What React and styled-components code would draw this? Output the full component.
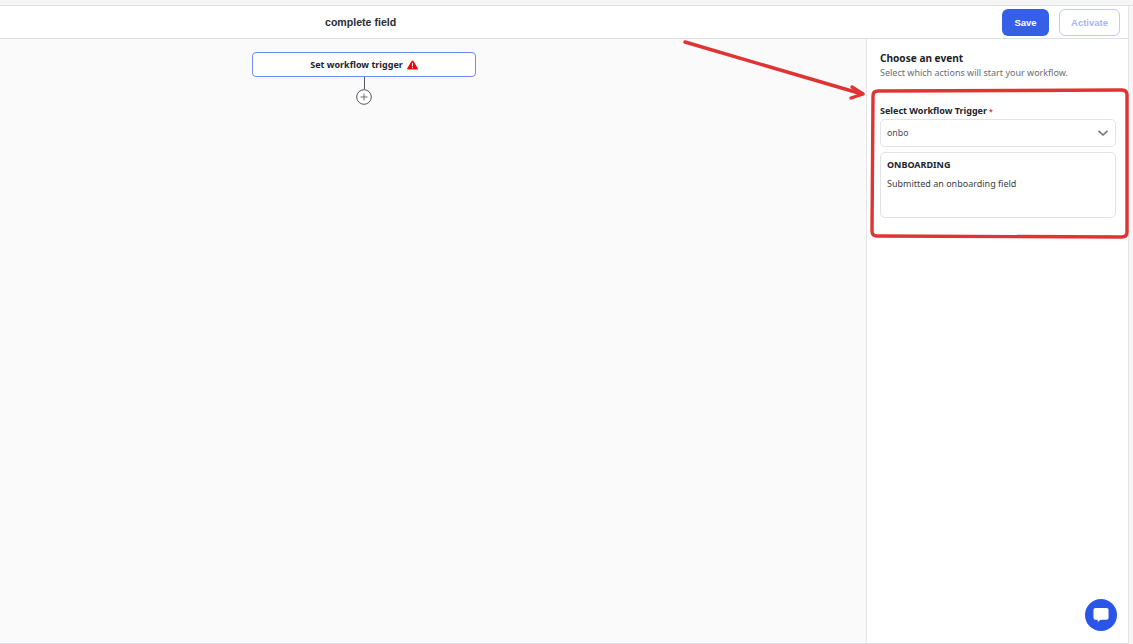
import React from "react";
import styled, { createGlobalStyle } from "styled-components";

const GlobalStyle = createGlobalStyle`
  html, body {
    margin: 0;
    padding: 0;
    background: #f7f7f8;
    font-family: "Noto Sans", "Open Sans", sans-serif;
    overflow: hidden;
  }
`;

const Page = styled.div`
  position: relative;
  width: 1133px;
  height: 644px;
  display: flex;
  flex-direction: column;
  overflow: hidden;
`;

const TopStrip = styled.div`
  height: 5px;
  background: #f5f5f6;
  border-bottom: 1px solid #dfe0e6;
`;

const Window = styled.div`
  width: 1128px;
  height: 637px;
  display: flex;
  flex-direction: column;
  background: #ffffff;
  border-right: 1px solid #e4e5ea;
  border-bottom: 1px solid #dfe0e6;
`;

const Header = styled.header`
  height: 32px;
  flex-shrink: 0;
  display: flex;
  align-items: center;
  justify-content: flex-end;
  gap: 10px;
  padding-right: 8px;
  border-bottom: 1px solid #dfe0e6;
  position: relative;
`;

const Title = styled.h1`
  position: absolute;
  left: 325px;
  top: 9px;
  margin: 0;
  font-family: "Liberation Sans", sans-serif;
  font-size: 10.6px;
  line-height: 14px;
  font-weight: 700;
  color: #2b2d38;
`;

const Button = styled.button`
  height: 27px;
  border-radius: 6px;
  font-family: "Liberation Sans", sans-serif;
  font-size: 9.5px;
  font-weight: 700;
  padding: 0;
  width: ${(p) => (p.$primary ? "47px" : "61px")};
  color: ${(p) => (p.$primary ? "#ffffff" : "#a6b6f4")};
  background: ${(p) => (p.$primary ? "#3560e6" : "#ffffff")};
  border: ${(p) => (p.$primary ? "none" : "1px solid #bfcbf6")};
`;

const Body = styled.div`
  flex: 1;
  display: flex;
  min-height: 0;
`;

const Canvas = styled.main`
  width: 866px;
  background: #fafafa;
  display: flex;
  flex-direction: column;
  align-items: center;
  padding-top: 13px;
  padding-right: 138px;
  box-sizing: border-box;
`;

const TriggerNode = styled.div`
  width: 224px;
  height: 25px;
  box-sizing: border-box;
  background: #ffffff;
  border: 1px solid #6f8dee;
  border-radius: 4px;
  display: flex;
  align-items: center;
  justify-content: center;
  gap: 4px;
  font-size: 9px;
  font-weight: 700;
  color: #22242e;
`;

const Connector = styled.div`
  width: 1px;
  height: 12px;
  background: #55575f;
`;

const Side = styled.aside`
  flex: 1;
  border-left: 1px solid #e4e5ea;
  padding: 12px 12px 0 13px;
  background: #ffffff;
`;

const SideTitle = styled.h2`
  margin: 0;
  font-size: 10.1px;
  line-height: 14px;
  font-weight: 700;
  color: #1d1f28;
`;

const SideHint = styled.p`
  margin: 1px 0 0;
  font-size: 9px;
  line-height: 13px;
  color: #6a6d78;
`;

const FieldLabel = styled.label`
  display: block;
  margin-top: 25px;
  font-size: 9px;
  line-height: 13px;
  font-weight: 700;
  color: #22242e;
`;

const Required = styled.span`
  color: #e5303a;
  margin-left: 2px;
  font-size: 7px;
`;

const SelectBox = styled.div`
  margin-top: 1px;
  height: 28px;
  box-sizing: border-box;
  border: 1px solid #e2e3ea;
  border-radius: 5px;
  display: flex;
  align-items: center;
  justify-content: space-between;
  padding: 0 6px 1px;
  font-size: 8.8px;
  color: #4a4c56;
`;

const OptionCard = styled.div`
  margin-top: 5px;
  height: 66px;
  box-sizing: border-box;
  border: 1px solid #e2e3ea;
  border-radius: 5px;
  padding: 5px 6px;
`;

const OptionName = styled.div`
  font-size: 9px;
  line-height: 14px;
  font-weight: 700;
  color: #22242e;
`;

const OptionText = styled.div`
  margin-top: 5px;
  font-size: 9px;
  line-height: 13px;
  color: #3c3e48;
`;

const Annotation = styled.svg`
  position: absolute;
  left: 0;
  top: 0;
  pointer-events: none;
`;

const ChatBubble = styled.button`
  position: absolute;
  left: 1085px;
  top: 599px;
  width: 32px;
  height: 32px;
  padding: 0;
  border: none;
  border-radius: 50%;
  background: #2b55e8;
  display: flex;
  align-items: center;
  justify-content: center;
`;

export default function App() {
  return (
    <Page>
      <GlobalStyle />
      <TopStrip />
      <Window>
        <Header>
          <Title>complete field</Title>
          <Button $primary>Save</Button>
          <Button>Activate</Button>
        </Header>
        <Body>
          <Canvas>
            <TriggerNode>
              Set workflow trigger
              <svg width="11" height="10" viewBox="0 0 11 10">
                <path d="M4.6 1.1 Q5.5 -0.1 6.4 1.1 L10.6 8 Q11.2 9.6 9.6 9.6 L1.4 9.6 Q-0.2 9.6 0.4 8 Z" fill="#f80000" />
                <rect x="5" y="2.8" width="1" height="3.6" fill="#ffffff" />
                <rect x="5" y="7.2" width="1" height="1.1" fill="#ffffff" />
              </svg>
            </TriggerNode>
            <Connector />
            <svg width="16" height="16" viewBox="0 0 16 16">
              <circle cx="8" cy="8" r="7.3" fill="#ffffff" stroke="#55575f" strokeWidth="1" />
              <path d="M8 4.5V11.5M4.5 8H11.5" stroke="#6a6c74" strokeWidth="1" />
            </svg>
          </Canvas>
          <Side>
            <SideTitle>Choose an event</SideTitle>
            <SideHint>Select which actions will start your workflow.</SideHint>
            <FieldLabel>
              Select Workflow Trigger<Required>*</Required>
            </FieldLabel>
            <SelectBox>
              onbo
              <svg width="12" height="8" viewBox="0 0 12 8">
                <path d="M1.5 1.8L6 6L10.5 1.8" fill="none" stroke="#6f717c" strokeWidth="1.6" />
              </svg>
            </SelectBox>
            <OptionCard>
              <OptionName>ONBOARDING</OptionName>
              <OptionText>Submitted an onboarding field</OptionText>
            </OptionCard>
          </Side>
        </Body>
      </Window>
      <Annotation width="1133" height="644" viewBox="0 0 1133 644">
        <g fill="none" stroke="#e03333" strokeWidth="3.4" strokeLinecap="round" strokeLinejoin="round">
          <path d="M685 42L862 94" />
          <path d="M852 87L863 94L851 98" />
          <path d="M878 91Q873 91 873 96L872 231Q872 236 877 236L1122 237Q1127 237 1127 232L1127 95Q1127 90 1122 90Z" />
        </g>
      </Annotation>
      <ChatBubble>
        <svg width="16" height="16" viewBox="0 0 17 16">
          <path d="M2.5 0.5H14.5A2 2 0 0 1 16.5 2.5V11A2 2 0 0 1 14.5 13H8L5 15.5V13H2.5A2 2 0 0 1 0.5 11V2.5A2 2 0 0 1 2.5 0.5Z" fill="#ffffff" />
        </svg>
      </ChatBubble>
    </Page>
  );
}
